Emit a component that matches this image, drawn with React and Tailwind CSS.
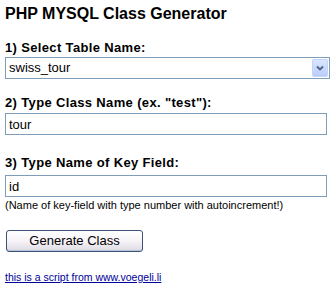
import { useState } from "react";

const LABEL = "block text-[13px] leading-[16px] font-bold tracking-[0.35px] text-black";
const FIELD =
  "block h-[22px] border border-[#7f9db9] bg-white px-[3px] text-[13px] leading-[20px] text-black outline-none";

const App = () => {
  const [table, setTable] = useState("swiss_tour");
  const [className, setClassName] = useState("tour");
  const [keyField, setKeyField] = useState("id");

  return (
    <div className="w-[336px] h-[290px] bg-white pl-[5px] font-['Liberation_Sans',Arial,sans-serif] overflow-hidden">
      <h1 className="mt-[4px] text-[16px] leading-[20px] font-bold text-black">PHP MYSQL Class Generator</h1>

      <label className={`${LABEL} mt-[16px]`}>1) Select Table Name:</label>
      <div className="relative mt-[1px] flex h-[22px] w-[325px] items-center border border-[#7f9db9] bg-white">
        <span className="flex-1 px-[3px] text-[13px] leading-[20px] text-black">{table}</span>
        <span className="mr-[1px] flex h-[18px] w-[16px] items-center justify-center rounded-[2px] border border-[#c3d3fd] bg-gradient-to-b from-[#dbe6fe] to-[#b9cdf8]">
          <svg width="8" height="6" viewBox="0 0 8 6">
            <path d="M1 1.5 L4 4.5 L7 1.5" fill="none" stroke="#4d6185" strokeWidth="1.8" />
          </svg>
        </span>
        <select
          value={table}
          onChange={(e) => setTable(e.target.value)}
          className="absolute inset-0 opacity-0 cursor-pointer"
        >
          <option value="swiss_tour">swiss_tour</option>
        </select>
      </div>

      <label className={`${LABEL} mt-[16px]`}>2) Type Class Name (ex. "test"):</label>
      <input
        value={className}
        onChange={(e) => setClassName(e.target.value)}
        className={`${FIELD} mt-[2px] w-[322px]`}
      />

      <label className={`${LABEL} mt-[20px]`}>3) Type Name of Key Field:</label>
      <input
        value={keyField}
        onChange={(e) => setKeyField(e.target.value)}
        className={`${FIELD} mt-[4px] w-[322px]`}
      />
      <p className="mt-[2px] text-[11px] leading-[13px] text-black">
        (Name of key-field with type number with autoincrement!)
      </p>

      <button className="ml-[1px] mt-[18px] block h-[22px] w-[137px] rounded-[3px] border border-[#3d5378] bg-gradient-to-b from-white via-[#f7f3f7] to-[#dcdce4] text-[13px] leading-[20px] text-black shadow-[inset_0_-1px_0_#b9c2d6]">
        Generate Class
      </button>

      <a href="#" className="mt-[19px] block w-max text-[10.5px] leading-[13px] text-[#000099] underline">
        this is a script from www.voegeli.li
      </a>
    </div>
  );
};

export default App;
